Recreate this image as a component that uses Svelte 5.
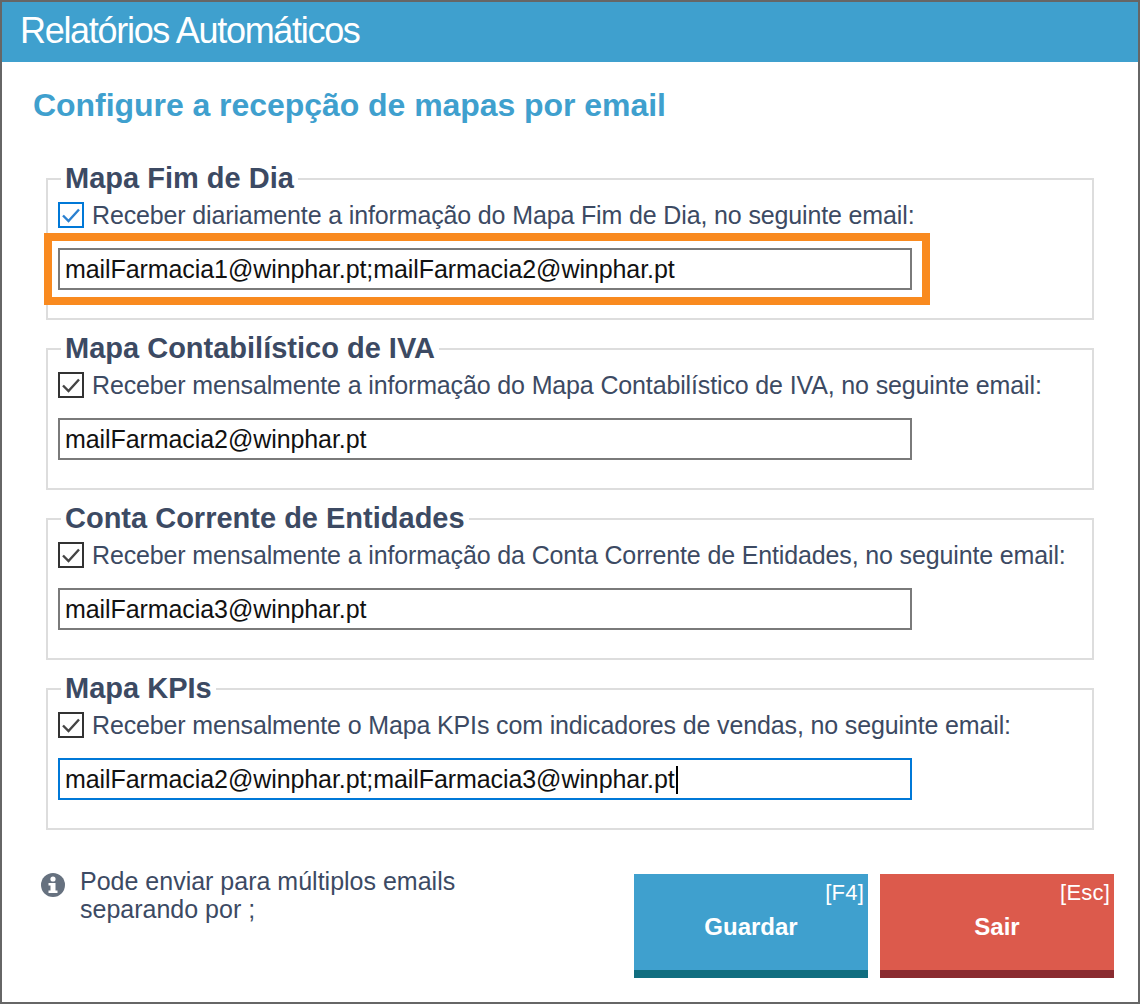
<script>
	const maps = [
		{ title: 'Mapa Fim de Dia', label: 'Receber diariamente a informação do Mapa Fim de Dia, no seguinte email:', value: 'mailFarmacia1@winphar.pt;mailFarmacia2@winphar.pt', highlight: true, focusCheck: true },
		{ title: 'Mapa Contabilístico de IVA', label: 'Receber mensalmente a informação do Mapa Contabilístico de IVA, no seguinte email:', value: 'mailFarmacia2@winphar.pt' },
		{ title: 'Conta Corrente de Entidades', label: 'Receber mensalmente a informação da Conta Corrente de Entidades, no seguinte email:', value: 'mailFarmacia3@winphar.pt' },
		{ title: 'Mapa KPIs', label: 'Receber mensalmente o Mapa KPIs com indicadores de vendas, no seguinte email:', value: 'mailFarmacia2@winphar.pt;mailFarmacia3@winphar.pt', active: true }
	];
</script>

<div class="dialog">
	<header class="title-bar">Relatórios Automáticos</header>

	<main class="content">
		<h1>Configure a recepção de mapas por email</h1>

		{#each maps as map}
			<fieldset>
				<legend>{map.title}</legend>
				<label class="check-row">
					<span class="check" class:blue={map.focusCheck}>
						<svg viewBox="0 0 22 22" width="22" height="22">
							<path d="M3 11.5 L8.5 17 L19 5.5" fill="none" stroke="currentColor" stroke-width="2.4" />
						</svg>
					</span>
					<span>{map.label}</span>
				</label>
				<div class="field-wrap">
					<div class="field" class:active={map.active}>
						{map.value}{#if map.active}<span class="caret"></span>{/if}
					</div>
					{#if map.highlight}
						<div class="marker"></div>
					{/if}
				</div>
			</fieldset>
		{/each}

		<footer class="bottom">
			<div class="hint">
				<svg class="info" viewBox="0 0 24 24" width="24" height="24">
					<circle cx="12" cy="12" r="12" fill="#66717f" />
					<circle cx="12" cy="6" r="2.6" fill="#fff" />
					<path d="M7.5 10 H14.5 V17.5 H16.5 V20 H7.5 V17.5 H9.5 V12.5 H7.5 Z" fill="#fff" />
				</svg>
				<p>Pode enviar para múltiplos emails<br />separando por ;</p>
			</div>
			<div class="actions">
				<button class="save" type="button">
					<span class="key">[F4]</span>
					Guardar
				</button>
				<button class="exit" type="button">
					<span class="key">[Esc]</span>
					Sair
				</button>
			</div>
		</footer>
	</main>
</div>

<style>
	:global(body) {
		margin: 0;
		background: #fff;
	}

	.dialog {
		box-sizing: border-box;
		width: 1140px;
		height: 1004px;
		border: 2px solid #666;
		font-family: 'Liberation Sans', Arial, sans-serif;
		color: #3c4a63;
		background: #fff;
	}

	.title-bar {
		height: 60px;
		padding-left: 18px;
		background: #3fa0ce;
		color: #fff;
		font-size: 36px;
		line-height: 58px;
		letter-spacing: -1.3px;
	}

	.content {
		padding: 0 44px;
	}

	h1 {
		margin: 0;
		margin-left: -13px;
		padding-top: 25px;
		height: 102px;
		box-sizing: border-box;
		color: #3fa0ce;
		font-size: 32px;
		line-height: 36px;
		font-weight: 700;
		letter-spacing: -0.05px;
	}

	fieldset {
		box-sizing: border-box;
		margin: 0 0 14px;
		padding: 0 10px;
		width: 1048px;
		height: 156px;
		border: 2px solid #ddd;
		position: relative;
	}

	legend {
		margin-left: 3px;
		padding: 0 4px;
		color: #3c4a63;
		font-size: 29px;
		line-height: 30px;
		font-weight: 700;
		position: relative;
		top: -1px;
	}

	.check-row {
		display: flex;
		align-items: center;
		gap: 8px;
		height: 26px;
		margin-top: 8px;
		font-size: 25px;
		line-height: 30px;
		white-space: nowrap;
		letter-spacing: -0.14px;
	}

	.check {
		box-sizing: border-box;
		flex: none;
		display: flex;
		width: 26px;
		height: 26px;
		border: 2px solid #333;
		color: #444;
	}

	.check.blue {
		border-color: #0078d7;
		color: #2a80d0;
	}

	.field-wrap {
		position: relative;
		margin-top: 20px;
		width: 854px;
	}

	.field {
		box-sizing: border-box;
		height: 42px;
		padding-left: 5px;
		border: 2px solid #7a7a7a;
		color: #111;
		font-size: 25px;
		line-height: 38px;
		white-space: nowrap;
		letter-spacing: -0.08px;
	}

	.field.active {
		border-color: #0078d7;
	}

	.caret {
		display: inline-block;
		width: 2px;
		height: 28px;
		margin-left: 1px;
		vertical-align: -6px;
		background: #000;
	}

	.marker {
		position: absolute;
		left: -14px;
		top: -15px;
		width: 886px;
		height: 72px;
		box-sizing: border-box;
		border: 8px solid #f98a1f;
	}

	.bottom {
		display: flex;
		justify-content: space-between;
		margin-top: 44px;
		margin-right: -20px;
	}

	.hint {
		display: flex;
		gap: 15px;
		margin-left: -5px;
		margin-top: -7px;
		font-size: 25px;
		line-height: 28px;
	}

	.info {
		margin-top: 6px;
		flex: none;
	}

	.hint p {
		margin: 0;
		color: #3c4a63;
	}

	.actions {
		display: flex;
		gap: 12px;
	}

	button {
		position: relative;
		box-sizing: border-box;
		width: 234px;
		height: 104px;
		padding: 10px 0 0;
		border: 0;
		border-bottom: 8px solid;
		color: #fff;
		font-family: inherit;
		font-size: 24px;
		font-weight: 700;
	}

	.save {
		background: #3fa0ce;
		border-bottom-color: #116e80;
	}

	.exit {
		background: #dc5a4c;
		border-bottom-color: #8a2b30;
	}

	.key {
		position: absolute;
		top: 6px;
		right: 4px;
		font-size: 22px;
		font-weight: 400;
		letter-spacing: 0.2px;
	}
</style>
